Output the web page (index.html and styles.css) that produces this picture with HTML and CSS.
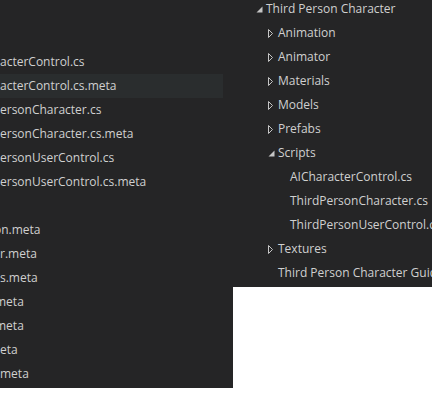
FILE: index.html
```html
<!DOCTYPE html>
<html>
<head>
<meta charset="utf-8">
<link rel="stylesheet" href="styles.css">
</head>
<body>
<div class="stage">
  <div class="pane left">
    <ul class="list">
      <li class="row"><span class="name">acterControl.cs</span></li>
      <li class="row sel"><span class="name">acterControl.cs.meta</span></li>
      <li class="row"><span class="name">ersonCharacter.cs</span></li>
      <li class="row"><span class="name">ersonCharacter.cs.meta</span></li>
      <li class="row"><span class="name">ersonUserControl.cs</span></li>
      <li class="row"><span class="name">ersonUserControl.cs.meta</span></li>
      <li class="row"><span class="name"></span></li>
      <li class="row"><span class="name cut-6">on.meta</span></li>
      <li class="row"><span class="name">r.meta</span></li>
      <li class="row"><span class="name">s.meta</span></li>
      <li class="row"><span class="name cut-5">meta</span></li>
      <li class="row"><span class="name cut-5">meta</span></li>
      <li class="row"><span class="name">eta</span></li>
      <li class="row"><span class="name">meta</span></li>
    </ul>
  </div>
  <div class="pane right">
    <ul class="tree">
      <li class="node l1"><span class="twist"><svg class="tri" width="7" height="7" viewBox="0 0 7 7"><polygon points="6.5,0.5 6.5,6.5 0.5,6.5"/></svg></span><span class="label">Third Person Character</span></li>
      <li class="node l2"><span class="twist"><svg class="tri-c" width="6" height="9" viewBox="0 0 6 9"><polygon points="0.5,0.5 4.5,4.5 0.5,8.5"/></svg></span><span class="label">Animation</span></li>
      <li class="node l2"><span class="twist"><svg class="tri-c" width="6" height="9" viewBox="0 0 6 9"><polygon points="0.5,0.5 4.5,4.5 0.5,8.5"/></svg></span><span class="label">Animator</span></li>
      <li class="node l2"><span class="twist"><svg class="tri-c" width="6" height="9" viewBox="0 0 6 9"><polygon points="0.5,0.5 4.5,4.5 0.5,8.5"/></svg></span><span class="label">Materials</span></li>
      <li class="node l2"><span class="twist"><svg class="tri-c" width="6" height="9" viewBox="0 0 6 9"><polygon points="0.5,0.5 4.5,4.5 0.5,8.5"/></svg></span><span class="label">Models</span></li>
      <li class="node l2"><span class="twist"><svg class="tri-c" width="6" height="9" viewBox="0 0 6 9"><polygon points="0.5,0.5 4.5,4.5 0.5,8.5"/></svg></span><span class="label">Prefabs</span></li>
      <li class="node l2"><span class="twist"><svg class="tri" width="7" height="7" viewBox="0 0 7 7"><polygon points="6.5,0.5 6.5,6.5 0.5,6.5"/></svg></span><span class="label">Scripts</span></li>
      <li class="node l3"><span class="twist"></span><span class="label">AICharacterControl.cs</span></li>
      <li class="node l3"><span class="twist"></span><span class="label">ThirdPersonCharacter.cs</span></li>
      <li class="node l3"><span class="twist"></span><span class="label">ThirdPersonUserControl.cs</span></li>
      <li class="node l2"><span class="twist"><svg class="tri-c" width="6" height="9" viewBox="0 0 6 9"><polygon points="0.5,0.5 4.5,4.5 0.5,8.5"/></svg></span><span class="label">Textures</span></li>
      <li class="node l2"><span class="twist"></span><span class="label">Third Person Character Guide.pdf</span></li>
    </ul>
  </div>
</div>
</body>
</html>
```

FILE: styles.css
```css
html, body {
  margin: 0;
  padding: 0;
  background: #ffffff;
}

body {
  font-family: "Open Sans", "Noto Sans", sans-serif;
  font-size: 12px;
  color: #d0d0d0;
}

.stage {
  display: flex;
  align-items: flex-start;
}

.pane {
  background: #252526;
  overflow: hidden;
}

.left {
  width: 233px;
  height: 388px;
}

.right {
  width: 199px;
  height: 287px;
}

.list {
  list-style: none;
  margin: 0;
  padding: 50px 0 0 0;
}

.row {
  width: 223px;
  height: 24px;
  line-height: 24px;
  white-space: nowrap;
  overflow: hidden;
}

.row.sel {
  background: #2a2d2e;
}

.name {
  display: inline-block;
}

.cut-6 {
  margin-left: -6px;
}

.cut-5 {
  margin-left: -5px;
}

.tree {
  list-style: none;
  margin: -3px 0 0 0;
  padding: 0;
}

.node {
  display: flex;
  align-items: center;
  height: 24px;
  white-space: nowrap;
}

.l1 { padding-left: 23px; }
.l2 { padding-left: 35px; }
.l3 { padding-left: 47px; }

.twist {
  flex: none;
  width: 10px;
  height: 24px;
  display: flex;
  align-items: center;
}

.tri polygon {
  fill: #c5c5c5;
}

.tri-c polygon {
  fill: none;
  stroke: #c5c5c5;
  stroke-width: 1;
}

.label {
  line-height: 24px;
}
```
